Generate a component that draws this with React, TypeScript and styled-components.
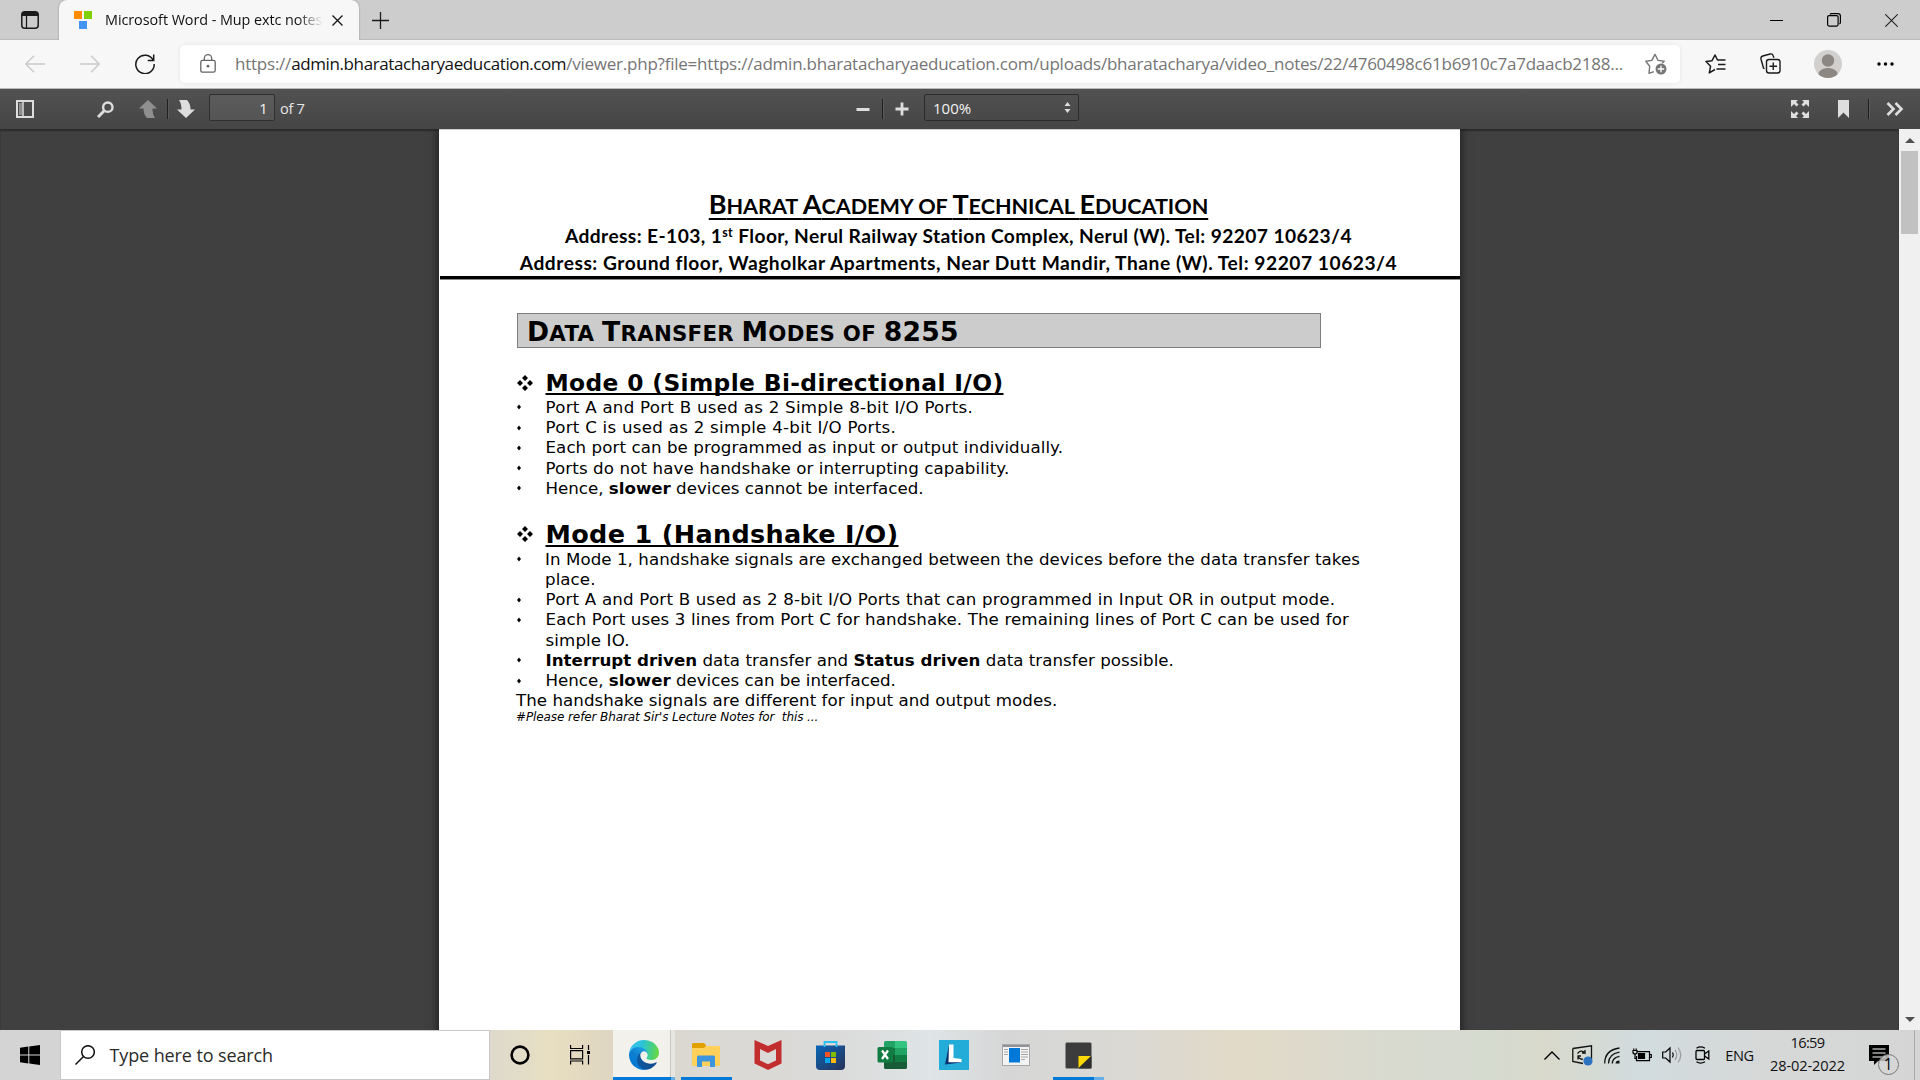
import React from "react";
import styled, { createGlobalStyle } from "styled-components";

const ui = `"Open Sans", "Noto Sans", sans-serif`;

const Global = createGlobalStyle`
  * { box-sizing: border-box; }
  html, body { margin: 0; padding: 0; overflow: hidden; }
  svg { display: block; flex: none; }
`;

const Screen = styled.div`
  width: 1920px;
  height: 1080px;
  display: flex;
  flex-direction: column;
  overflow: hidden;
  background: #404040;
  font-family: ${ui};
`;

const Slot = styled.div<{ $w: number; $h?: number }>`
  flex: none;
  width: ${(p) => p.$w}px;
  height: ${(p) => (p.$h ? `${p.$h}px` : "100%")};
  display: flex;
  align-items: center;
  justify-content: center;
`;

const Spacer = styled.div`
  flex: 1;
`;

const Gap = styled.div<{ $w: number }>`
  flex: none;
  width: ${(p) => p.$w}px;
`;

/* Browser chrome */
const TabStrip = styled.div`
  flex: none;
  height: 40px;
  display: flex;
  background: #cdcdcd;
  box-shadow: inset 0 -1px 0 #bcbcbc;
`;

const Tab = styled.div`
  width: 300px;
  height: 40px;
  display: flex;
  align-items: center;
  padding: 0 14px 0 15px;
  background: #f7f7f7;
  border-radius: 8px 8px 0 0;
  box-shadow: 0 0 2px rgba(0, 0, 0, 0.35);
  clip-path: inset(-2px -3px 0 -3px);
`;

const TabTitle = styled.div`
  width: 218px;
  margin: 0 9px 0 13px;
  padding-bottom: 1px;
  overflow: hidden;
  white-space: nowrap;
  font-size: 14.4px;
  letter-spacing: -0.06px;
  color: #111;
  mask-image: linear-gradient(to right, #000 88%, transparent 100%);
`;

const NavBar = styled.div`
  flex: none;
  height: 49px;
  display: flex;
  align-items: center;
  padding: 0 7px 1px 7.5px;
  background: #f7f7f7;
  border-bottom: 1px solid #b9b9b9;
`;

const AddressBar = styled.div`
  width: 1500px;
  height: 38px;
  margin: 0 7.5px;
  display: flex;
  align-items: center;
  background: #fff;
  border-radius: 5px;
  box-shadow: 0 0 4px rgba(0, 0, 0, 0.08);
`;

const Url = styled.div`
  width: 1409.5px;
  padding-bottom: 1px;
  white-space: pre;
  font-size: 17px;
  color: #757575;
  letter-spacing: -0.232px;
`;

const Host = styled.span`
  color: #111;
  letter-spacing: -0.385px;
`;

/* PDF toolbar */
const PdfBar = styled.div`
  flex: none;
  height: 40px;
  display: flex;
  align-items: center;
  background: linear-gradient(#525252, #454545);
  color: #e6e6e6;
  font-size: 14.6px;
`;

const Divider = styled.div<{ $ml: number; $mr: number }>`
  width: 1px;
  height: 20px;
  margin: 0 ${(p) => p.$mr}px 0 ${(p) => p.$ml}px;
  background: #1f1f1f;
  box-shadow: 1px 0 0 #5a5a5a;
`;

const PageInput = styled.div`
  width: 66px;
  height: 27px;
  margin: 0 5px 3px 14px;
  padding-right: 6.5px;
  display: flex;
  align-items: center;
  justify-content: flex-end;
  border: 1px solid #2f2f2f;
  border-radius: 2px;
  background: linear-gradient(#5c5c5c, #545454);
  color: #f2f2f2;
`;

const PageCount = styled.div`
  width: 576px;
  padding-bottom: 3px;
  letter-spacing: -0.3px;
`;

const ZoomSelect = styled.div`
  width: 155px;
  height: 27px;
  margin: 0 0 3px 15px;
  padding: 0 7px 0 8px;
  display: flex;
  align-items: center;
  justify-content: space-between;
  border: 1px solid #2b2b2b;
  border-radius: 2px;
  background: linear-gradient(#505050, #484848);
  color: #f2f2f2;
  font-size: 15px;
`;

/* Document */
const Viewer = styled.div`
  flex: 1;
  min-height: 0;
  display: flex;
`;

const Canvas = styled.div`
  flex: 1;
  min-width: 0;
  overflow: hidden;
  padding-left: 439px;
  background: #404040;
  box-shadow: inset 0 2px 2px rgba(0, 0, 0, 0.35);
`;

const Page = styled.div`
  width: 1021px;
  height: 1320px;
  padding-top: 58.6px;
  background: #fff;
  border-top: 1px solid #cfcfcf;
  color: #000;
  box-shadow: 0 0 9px 1px rgba(0, 0, 0, 0.6);
`;

const Letterhead = styled.div`
  margin-left: 1px;
  padding: 0 0 0.2px 17px;
  border-bottom: 3px solid #000;
  box-shadow: 0 1px 0 #8a8a8a;
  text-align: center;
  font-family: Lato, sans-serif;
  font-weight: 700;
`;

const Academy = styled.div`
  height: 33.2px;
  line-height: 29px;
  font-size: 21.6px;
  letter-spacing: -0.04px;
  text-decoration: underline;
  text-decoration-thickness: 2px;
  text-underline-offset: 4px;
  text-decoration-skip-ink: none;
`;

const Cap = styled.span<{ $s: number }>`
  font-size: ${(p) => p.$s}px;
`;

const Address = styled.div<{ $ls: number }>`
  height: 27px;
  line-height: 28px;
  font-size: 19.2px;
  white-space: nowrap;
  letter-spacing: ${(p) => p.$ls}px;
`;

const Sup = styled.sup`
  font-size: 12.5px;
  line-height: 0;
  vertical-align: 6px;
`;

const Body = styled.div`
  padding: 34.4px 100px 0 78px;
  font-family: "DejaVu Sans", Verdana, sans-serif;
`;

const Banner = styled.div`
  width: 804px;
  height: 35px;
  padding: 1.5px 0 0 9px;
  margin-bottom: 20.4px;
  border: 1.5px solid #7d7d7d;
  background: #ccc;
  font-size: 21.3px;
  font-weight: 700;
  line-height: 31.5px;
  letter-spacing: 0.27px;
`;

const ModeHeading = styled.div<{ $size: number; $h: number; $ls: number }>`
  height: ${(p) => p.$h}px;
  line-height: ${(p) => p.$h}px;
  display: flex;
  align-items: center;
  font-size: ${(p) => p.$size}px;
  font-weight: 700;
  letter-spacing: ${(p) => p.$ls}px;
`;

const Underlined = styled.span`
  margin-left: 12.5px;
  text-decoration: underline;
  text-decoration-thickness: 2px;
  text-underline-offset: 2px;
  text-decoration-skip-ink: none;
`;

const Notes = styled.ul<{ $gap: number; $line: number }>`
  margin: 0 0 ${(p) => p.$gap}px;
  padding: 0;
  list-style: none;
  line-height: ${(p) => p.$line}px;
`;

const Note = styled.li<{ $ls: number }>`
  display: flex;
  font-size: 16.67px;
  letter-spacing: ${(p) => p.$ls}px;
  white-space: nowrap;
`;

const Dot = styled.span`
  width: 28.5px;
  padding-top: 6.5px;
`;

const Plain = styled.div`
  font-size: 16.67px;
  line-height: 20.2px;
  letter-spacing: 0.046px;
  margin-left: -1px;
`;

const Footnote = styled.div`
  font-size: 12px;
  line-height: 13.4px;
  font-style: italic;
  white-space: pre;
  letter-spacing: -0.1px;
  margin-left: -1px;
`;

const Scrollbar = styled.div`
  width: 21px;
  display: flex;
  flex-direction: column;
  align-items: center;
  background: #f0f0f0;
`;

const Thumb = styled.div`
  width: 17px;
  height: 83px;
  background: #c1c1c1;
`;

/* Taskbar */
const Taskbar = styled.div`
  flex: none;
  height: 50px;
  display: flex;
  align-items: stretch;
  background: linear-gradient(
    to right,
    #d4d4d4 0,
    #d4d4d4 60px,
    #dddacd 490px,
    #e8dfc2 550px,
    #e2d8c0 590px,
    #d9d3c8 640px,
    #dbd9d4 700px,
    #dadad9 830px,
    #dfe4e6 930px,
    #d6d6d6 1010px,
    #dad9d4 1120px,
    #e2dac8 1240px,
    #d9dad0 1380px,
    #d5dacf 1490px,
    #d8d9cb 1545px,
    #d2dcde 1640px,
    #d6d8d8 1760px,
    #d5d5d5 1920px
  );
`;

const SearchBox = styled.div`
  width: 430px;
  padding-left: 14px;
  display: flex;
  align-items: center;
  gap: 14.5px;
  background: #fff;
  border: 1px solid #c8c8c8;
  font-size: 18px;
  letter-spacing: -0.11px;
  color: #2b2b2b;
`;

const Launch = styled.div<{ $active?: boolean }>`
  width: 62px;
  display: flex;
  flex-direction: column;
  align-items: center;
  background: ${(p) =>
    p.$active
      ? "linear-gradient(to right, #f3f1ec 57px, #c9c6c1 57px, #c9c6c1 58px, #e8e6e2 58px)"
      : "none"};
`;

const AppIcon = styled.div`
  height: 47px;
  padding-top: 3px;
  display: flex;
  align-items: center;
`;

const Running = styled.div<{ $w: number; $tail: number }>`
  width: ${(p) => p.$w}px;
  height: 3px;
  background: linear-gradient(
    to right,
    #0078d7 ${(p) => p.$w - p.$tail}px,
    #66aee7 ${(p) => p.$w - p.$tail}px
  );
`;

const Lang = styled.div`
  width: 45px;
  display: flex;
  align-items: center;
  justify-content: center;
  font-size: 14.6px;
  letter-spacing: -0.4px;
  color: #111;
`;

const Clock = styled.div`
  width: 91px;
  display: flex;
  flex-direction: column;
  align-items: center;
  padding-top: 1px;
  font-size: 14.6px;
  line-height: 23px;
  letter-spacing: -0.1px;
  color: #111;
`;

const Time = styled.div`
  letter-spacing: -0.6px;
`;

const ShowDesktop = styled.div`
  width: 6px;
  border-left: 1px solid #a9a9a9;
`;

const Bullet = () => (
  <Dot>
    <svg width="4" height="6" viewBox="0 0 4 6">
      <path d="M2 0.600 4 3 2 5.400 0 3Z" fill="#000" />
    </svg>
  </Dot>
);

const Diamonds = () => (
  <svg width="16" height="16" viewBox="0 0 16 16" fill="#000">
    <path d="M8 0 11 3 8 6 5 3ZM8 10 11 13 8 16 5 13ZM3 5 6 8 3 11 0 8ZM13 5 16 8 13 11 10 8Z" />
  </svg>
);

const EdgeLogo = () => (
  <svg width="30" height="30" viewBox="0 0 256 256">
    <defs>
      <linearGradient id="ea" x1="60" y1="177" x2="241" y2="177" gradientUnits="userSpaceOnUse">
        <stop offset="0" stopColor="#0c59a4" />
        <stop offset="1" stopColor="#114a8b" />
      </linearGradient>
      <linearGradient id="eb" x1="150" y1="100" x2="46" y2="225" gradientUnits="userSpaceOnUse">
        <stop offset="0" stopColor="#1b9de2" />
        <stop offset="0.5" stopColor="#0f80d0" />
        <stop offset="1" stopColor="#0078d4" />
      </linearGradient>
      <linearGradient id="ec" x1="20" y1="70" x2="250" y2="110" gradientUnits="userSpaceOnUse">
        <stop offset="0" stopColor="#35c1f1" />
        <stop offset="0.4" stopColor="#2cc3d8" />
        <stop offset="0.75" stopColor="#45cf87" />
        <stop offset="1" stopColor="#66d845" />
      </linearGradient>
    </defs>
    <g transform="translate(-4.63 -4.92)">
      <path fill="url(#ea)" d="M235.68,195.46a93.73,93.73,0,0,1-10.54,4.71,101.87,101.87,0,0,1-35.9,6.46c-47.32,0-88.54-32.55-88.54-74.32A31.48,31.48,0,0,1,117.13,105c-42.8,1.8-53.8,46.4-53.8,72.53,0,73.88,68.09,81.37,82.76,81.37,7.91,0,19.84-2.3,27-4.56l1.31-.44a128.34,128.34,0,0,0,66.6-52.8,4,4,0,0,0-5.32-5.64Z" />
      <path fill="url(#eb)" d="M110.34,246.34A79.2,79.2,0,0,1,87.6,225,80.72,80.72,0,0,1,117.13,105c3.12-1.47,8.45-4.13,15.54-4a32.35,32.35,0,0,1,25.69,13,31.88,31.88,0,0,1,6.36,18.66c0-.21,24.46-79.6-80-79.6-43.9,0-80,41.66-80,78.21a130.15,130.15,0,0,0,12.11,56,128,128,0,0,0,156.38,67.11,75.55,75.55,0,0,1-62.78-8Z" />
      <path fill="url(#ec)" d="M156.94,153.78c-.81,1.05-3.3,2.5-3.3,5.66,0,2.61,1.7,5.12,4.72,7.23,14.38,10,41.49,8.68,41.56,8.68a59.56,59.56,0,0,0,30.27-8.35A61.38,61.38,0,0,0,260.62,114c.26-22.41-8-37.31-11.34-43.91C228.09,28.76,182.35,5,132.62,5a128,128,0,0,0-128,126.2c.48-36.54,36.8-66.05,80-66.05,3.5,0,23.46.34,42,10.07,16.34,8.58,24.9,18.94,30.85,29.21,6.18,10.67,7.28,24.15,7.28,29.52S162,147.2,156.94,153.78Z" />
    </g>
  </svg>
);

const Explorer = () => (
  <svg width="28" height="24" viewBox="0 0 28 24">
    <path d="M1 0h11l2 2v3H0V1Z" fill="#dfa000" />
    <path d="M0 5h12l2-2h13q1 0 1 1v18q0 1-1 1H1q-1 0-1-1Z" fill="#ffd05a" />
    <path d="M5 24V14q0-1.500 1.500-1.500h15Q23 12.500 23 14v10h-5v-5.500h-8V24Z" fill="#3d95de" />
  </svg>
);

const McAfee = () => (
  <svg width="28" height="30" viewBox="0 0 28 30">
    <path d="M0.500 0 14 6 27.500 0V23.500L14 30 0.500 23.500ZM6 9v11.500l8 3.700 8-3.700V9l-8 4Z" fill="#c22d2e" fillRule="evenodd" />
  </svg>
);

const Store = () => (
  <svg width="29" height="29" viewBox="0 0 29 29">
    <defs>
      <linearGradient id="st" x1="0" y1="0" x2="1" y2="1">
        <stop offset="0" stopColor="#0a66b8" />
        <stop offset="1" stopColor="#273257" />
      </linearGradient>
    </defs>
    <path d="M0 4.500h29V25q0 4-4 4H4q-4 0-4-4Z" fill="url(#st)" />
    <path d="M8.500 6V1h12v5" fill="none" stroke="#2cc1f3" strokeWidth="1.800" />
    <path d="M9 11h5v5H9Z" fill="#f35325" />
    <path d="M15 11h5v5h-5Z" fill="#81bc06" />
    <path d="M9 17h5v5H9Z" fill="#05a6f0" />
    <path d="M15 17h5v5h-5Z" fill="#ffba08" />
  </svg>
);

const Excel = () => (
  <svg width="30" height="28" viewBox="0 0 30 28">
    <path d="M7 1.500Q7 0 8.500 0H18v7H7Z" fill="#21a366" />
    <path d="M18 0h10.500Q30 0 30 1.500V7H18Z" fill="#33c481" />
    <path d="M7 7h11v7H7Z" fill="#107c41" />
    <path d="M18 7h12v7H18Z" fill="#21a366" />
    <path d="M7 14h11v7H7Z" fill="#185c37" />
    <path d="M18 14h12v7H18Z" fill="#107c41" />
    <path d="M7 21h23v5.500Q30 28 28.500 28h-20Q7 28 7 26.500Z" fill="#185c37" />
    <rect x="0.500" y="6" width="15.500" height="15.500" rx="1.500" fill="#107c41" />
    <path d="M5 9.500l6 8.500M11 9.500l-6 8.500" stroke="#fff" strokeWidth="2.200" />
  </svg>
);

const LApp = () => (
  <svg width="30" height="30" viewBox="0 0 30 30">
    <path d="M0 0h30v30H0Z" fill="#24acd9" />
    <path d="M10 5 6 24.500 22.500 22.500 13 20Z" fill="#07326e" />
    <path d="M10 4.500h4.500V18l8 1v3.300H9.500Z" fill="#fff" />
  </svg>
);

const WindowApp = () => (
  <svg width="28" height="22" viewBox="0 0 28 22">
    <rect x="0.500" y="0.500" width="27" height="21" fill="#f3f3f3" stroke="#a8a8a8" />
    <path d="M1 1h26v2H1Z" fill="#8f9298" />
    <path d="M2 5.500h4M2 8h4M2 10.500h4M19 5.500h7M19 8h7M19 10.500h7M19 13h7M19 15.500h4" stroke="#a7a7a7" />
    <path d="M7 4h11v14.500H7Z" fill="#0078d7" />
  </svg>
);

const Sticky = () => (
  <svg width="27" height="27" viewBox="0 0 27 27">
    <rect x="0.500" y="0.500" width="26" height="26" rx="1.500" fill="#3c3c3c" stroke="#8c8c8c" strokeWidth="0.600" />
    <path d="M13.500 26V14H26Z" fill="#ffd800" />
    <path d="M13.500 26.500 26.500 14V25.500q0 1-1 1Z" fill="#2e2e2e" />
  </svg>
);

const modeZero = [
  { ls: 0.268, text: <>Port A and Port B used as 2 Simple 8-bit I/O Ports.</> },
  { ls: 0.265, text: <>Port C is used as 2 simple 4-bit I/O Ports.</> },
  { ls: 0.074, text: <>Each port can be programmed as input or output individually.</> },
  { ls: 0.105, text: <>Ports do not have handshake or interrupting capability.</> },
  { ls: 0, text: <>Hence, <b>slower</b> devices cannot be interfaced.</> },
];

const modeOne = [
  { ls: 0.059, text: <>In Mode 1, handshake signals are exchanged between the devices before the data transfer takes<br />place.</> },
  { ls: 0.2, text: <>Port A and Port B used as 2 8-bit I/O Ports that can programmed in Input OR in output mode.</> },
  { ls: 0.12, text: <>Each Port uses 3 lines from Port C for handshake. The remaining lines of Port C can be used for<br />simple IO.</> },
  { ls: 0.03, text: <><b>Interrupt driven</b> data transfer and <b>Status driven</b> data transfer possible.</> },
  { ls: -0.01, text: <>Hence, <b>slower</b> devices can be interfaced.</> },
];

export default function App() {
  return (
    <Screen>
      <Global />
      <TabStrip>
        <Slot $w={59}>
          <svg width="18" height="18" viewBox="0 0 18 18">
            <rect x="0.800" y="0.800" width="16.400" height="16.400" rx="3" fill="none" stroke="#1b1b1b" strokeWidth="1.500" />
            <path d="M1 5V3.500Q1 1 3.500 1h11Q17 1 17 3.500V5Z" fill="#1b1b1b" />
            <path d="M5.500 5v12" stroke="#1b1b1b" strokeWidth="1.300" />
          </svg>
        </Slot>
        <Tab>
          <svg width="18" height="18" viewBox="0 0 18 18">
            <path d="M0 0h8v8H0Z" fill="#ff8c00" />
            <path d="M10 0h8v8h-8Z" fill="#7ed000" />
            <path d="M5 10h8v8H5Z" fill="#4394f0" />
          </svg>
          <TabTitle>Microsoft Word - Mup extc notes</TabTitle>
          <svg width="11" height="11" viewBox="0 0 11 11">
            <path d="M0.500 0.500l10 10M10.500 0.500l-10 10" stroke="#1b1b1b" strokeWidth="1.400" />
          </svg>
        </Tab>
        <Slot $w={43}>
          <svg width="17" height="17" viewBox="0 0 17 17">
            <path d="M8.500 0v17M0 8.500h17" stroke="#1b1b1b" strokeWidth="1.300" />
          </svg>
        </Slot>
        <Spacer />
        <Slot $w={57}>
          <svg width="13" height="13" viewBox="0 0 13 13">
            <path d="M0 6.500h13" stroke="#000" />
          </svg>
        </Slot>
        <Slot $w={57}>
          <svg width="14" height="14" viewBox="0 0 14 14" fill="none" stroke="#000" strokeWidth="1.200">
            <rect x="0.600" y="2.600" width="10.500" height="10.500" rx="1.500" />
            <path d="M3 1.500Q3.400 0.600 4.600 0.600H11q2.400 0 2.400 2.400v6.500q0 1-1 1.500" />
          </svg>
        </Slot>
        <Slot $w={58}>
          <svg width="13" height="13" viewBox="0 0 13 13">
            <path d="M0.300 0.300l12.400 12.400M12.700 0.300L0.300 12.700" stroke="#222" strokeWidth="1.100" />
          </svg>
        </Slot>
      </TabStrip>

      <NavBar>
        <Slot $w={55}>
          <svg width="20" height="18" viewBox="0 0 20 18">
            <path d="M20 9H1M9 0.700 0.800 9 9 17.300" fill="none" stroke="#cacaca" strokeWidth="1.400" />
          </svg>
        </Slot>
        <Slot $w={55}>
          <svg width="20" height="18" viewBox="0 0 20 18">
            <path d="M0 9h19M11 0.700 19.200 9 11 17.300" fill="none" stroke="#cacaca" strokeWidth="1.400" />
          </svg>
        </Slot>
        <Slot $w={55}>
          <svg width="20" height="20" viewBox="0 0 20 20">
            <path d="M18.200 6.200A9.200 9.200 0 1 0 19.200 10M18.700 0.500v6H12.700" fill="none" stroke="#1b1b1b" strokeWidth="1.500" />
          </svg>
        </Slot>
        <AddressBar>
          <Slot $w={55}>
            <svg width="16" height="19" viewBox="0 0 16 19">
              <rect x="0.800" y="6.300" width="14.400" height="11.900" rx="1.800" fill="none" stroke="#666" strokeWidth="1.300" />
              <path d="M4.300 6V4.400a3.700 3.700 0 0 1 7.400 0V6" fill="none" stroke="#666" strokeWidth="1.300" />
              <circle cx="8" cy="12.200" r="1.400" fill="#666" />
            </svg>
          </Slot>
          <Url>
            https://<Host>admin.bharatacharyaeducation.com</Host>
            /viewer.php?file=https://admin.bharatacharyaeducation.com/uploads/bharatacharya/video_notes/22/4760498c61b6910c7a7daacb2188...
          </Url>
          <svg width="22" height="22" viewBox="0 0 22 22">
            <path d="M9 18.600 4 20.300l0.700-7L0.800 8.200l6-0.800L10 1.300l3 6.100 6.200 0.800-2 2" fill="none" stroke="#767676" strokeWidth="1.400" strokeLinejoin="round" />
            <circle cx="16" cy="16" r="5.500" fill="#767676" />
            <path d="M16 12.800v6.400M12.800 16h6.400" stroke="#fff" strokeWidth="1.300" />
          </svg>
        </AddressBar>
        <Slot $w={55}>
          <svg width="21" height="20" viewBox="0 0 21 20" fill="none" stroke="#1b1b1b" strokeWidth="1.500" strokeLinejoin="round">
            <path d="M10 15.500 4.300 18.900l1.300-6.700L1 7.500l6-0.800L10 1l2.500 5H20.500M13 10.500h7.500M11.500 15h9" />
          </svg>
        </Slot>
        <Slot $w={55}>
          <svg width="21" height="21" viewBox="0 0 21 21" fill="none" stroke="#1b1b1b" strokeWidth="1.400">
            <rect x="6.500" y="6.500" width="13.500" height="13.500" rx="2.500" />
            <path d="M13.250 9.500v7.500M9.500 13.250h7.500M4.500 15.800 3.500 15 1 6.200Q0.400 3.800 2.700 3l7.500-2q2.300-0.500 3 1.700l0.700 2" />
          </svg>
        </Slot>
        <Slot $w={60}>
          <svg width="28" height="28" viewBox="0 0 28 28">
            <clipPath id="av"><circle cx="14" cy="14" r="14" /></clipPath>
            <circle cx="14" cy="14" r="14" fill="#d2d0ce" />
            <g clipPath="url(#av)" fill="#8c8782">
              <circle cx="14" cy="10.500" r="6.200" />
              <ellipse cx="14" cy="25" rx="10" ry="7" />
            </g>
          </svg>
        </Slot>
        <Slot $w={55}>
          <svg width="17" height="4" viewBox="0 0 17 4">
            <circle cx="2" cy="2" r="1.700" /><circle cx="8.500" cy="2" r="1.700" /><circle cx="15" cy="2" r="1.700" />
          </svg>
        </Slot>
      </NavBar>

      <PdfBar>
        <Slot $w={50}>
          <svg width="18" height="18" viewBox="0 0 18 18">
            <rect x="1" y="1" width="16" height="16" fill="none" stroke="#dedede" strokeWidth="2" />
            <path d="M3 3h3v12H3Z" fill="#8d8d8d" />
            <path d="M7 2v14" stroke="#dedede" strokeWidth="1.500" />
          </svg>
        </Slot>
        <Gap $w={38} />
        <Slot $w={35}>
          <svg width="17" height="17" viewBox="0 0 17 17" fill="none" stroke="#dedede">
            <circle cx="10.800" cy="6.200" r="4.700" strokeWidth="2.400" />
            <path d="M7 10 1 16" strokeWidth="3" />
          </svg>
        </Slot>
        <Gap $w={16} />
        <svg width="18" height="18" viewBox="0 0 18 18">
          <path d="M9 0l9 8.500h-4.500q0 6 2.500 9.500H8Q4.500 14.500 4.500 8.500H0Z" fill="#8f8f8f" />
        </svg>
        <Divider $ml={10} $mr={9} />
        <svg width="18" height="18" viewBox="0 0 18 18">
          <path d="M9 18l9-8.500h-4.500Q13.500 3.500 10 0H2q2.500 3.500 2.500 9.500H0Z" fill="#dedede" />
        </svg>
        <PageInput>1</PageInput>
        <PageCount>of 7</PageCount>
        <svg width="14" height="3" viewBox="0 0 14 3"><path d="M0.500 0h13v3h-13Z" fill="#dedede" /></svg>
        <Divider $ml={12} $mr={12} />
        <svg width="14" height="14" viewBox="0 0 14 14"><path d="M5.600 0.500h2.800v13H5.600ZM0.500 5.600h13v2.800h-13Z" fill="#dedede" /></svg>
        <ZoomSelect>
          100%
          <svg width="7" height="11" viewBox="0 0 7 11"><path d="M3.500 0 6.500 4h-6ZM3.500 11l3-4h-6Z" fill="#dedede" /></svg>
        </ZoomSelect>
        <Spacer />
        <Slot $w={48}>
          <svg width="18" height="18" viewBox="0 0 18 18" fill="#dedede">
            <path d="M0 0h7L5 2l2.500 2.500-2 2L3 4 0 7ZM18 0h-7l2 2-2.500 2.500 2 2L15 4l3 3ZM0 18h7l-2-2 2.500-2.500-2-2L3 14l-3-3ZM18 18h-7l2-2-2.500-2.500 2-2L15 14l3-3Z" />
          </svg>
        </Slot>
        <Slot $w={38}>
          <svg width="11" height="18" viewBox="0 0 11 18"><path d="M0 0h11v18l-5.500-5.500L0 18Z" fill="#dedede" /></svg>
        </Slot>
        <Divider $ml={6} $mr={1} />
        <Slot $w={50}>
          <svg width="18" height="14" viewBox="0 0 18 14"><path d="M1.500 1l6 6-6 6M9.500 1l6 6-6 6" fill="none" stroke="#dedede" strokeWidth="2.600" /></svg>
        </Slot>
      </PdfBar>

      <Viewer>
        <Canvas>
          <Page>
            <Letterhead>
              <Academy>
                <Cap $s={27}>B</Cap>HARAT <Cap $s={27}>A</Cap>CADEMY OF <Cap $s={27}>T</Cap>ECHNICAL <Cap $s={27}>E</Cap>DUCATION
              </Academy>
              <Address $ls={0.4}>
                Address: E-103, 1<Sup>st</Sup> Floor, Nerul Railway Station Complex, Nerul (W). Tel: 92207 10623/4
              </Address>
              <Address $ls={0.53}>
                Address: Ground floor, Wagholkar Apartments, Near Dutt Mandir, Thane (W). Tel: 92207 10623/4
              </Address>
            </Letterhead>
            <Body>
              <Banner>
                <Cap $s={26.6}>D</Cap>ATA <Cap $s={26.6}>T</Cap>RANSFER <Cap $s={26.6}>M</Cap>ODES OF <Cap $s={26.6}>8255</Cap>
              </Banner>
              <ModeHeading $size={23.33} $h={29} $ls={0.374}>
                <Diamonds />
                <Underlined>Mode 0 (Simple Bi-directional I/O)</Underlined>
              </ModeHeading>
              <Notes $gap={19.8} $line={20.25}>
                {modeZero.map((n, i) => (
                  <Note key={i} $ls={n.ls}><Bullet /><span>{n.text}</span></Note>
                ))}
              </Notes>
              <ModeHeading $size={25.5} $h={31} $ls={0.333}>
                <Diamonds />
                <Underlined>Mode 1 (Handshake I/O)</Underlined>
              </ModeHeading>
              <Notes $gap={0} $line={20.2}>
                {modeOne.map((n, i) => (
                  <Note key={i} $ls={n.ls}><Bullet /><span>{n.text}</span></Note>
                ))}
              </Notes>
              <Plain>The handshake signals are different for input and output modes.</Plain>
              <Footnote>#Please refer Bharat Sir's Lecture Notes for  this ...</Footnote>
            </Body>
          </Page>
        </Canvas>
        <Scrollbar>
          <Slot $w={21} $h={22}>
            <svg width="10" height="5" viewBox="0 0 10 5"><path d="M0 5 5 0l5 5Z" fill="#505050" /></svg>
          </Slot>
          <Thumb />
          <Spacer />
          <Slot $w={21} $h={21}>
            <svg width="10" height="5" viewBox="0 0 10 5"><path d="M0 0h10L5 5Z" fill="#505050" /></svg>
          </Slot>
        </Scrollbar>
      </Viewer>

      <Taskbar>
        <Slot $w={60}>
          <svg width="20" height="20" viewBox="0 0 20 20">
            <path d="M0 2.800 8.300 1.600V9.500H0ZM9.300 1.400 20 0v9.500H9.300ZM0 10.500h8.300v7.900L0 17.200ZM9.300 10.500H20V20L9.300 18.600Z" fill="#000" />
          </svg>
        </Slot>
        <SearchBox>
          <svg width="20" height="20" viewBox="0 0 20 20" fill="none" stroke="#111" strokeWidth="1.500">
            <circle cx="13" cy="7" r="6.300" />
            <path d="M8.500 11.500 0.500 19.500" />
          </svg>
          Type here to search
        </SearchBox>
        <Slot $w={60}>
          <svg width="20" height="20" viewBox="0 0 20 20"><circle cx="10" cy="10" r="8.400" fill="none" stroke="#000" strokeWidth="2.600" /></svg>
        </Slot>
        <Slot $w={60}>
          <svg width="20" height="20" viewBox="0 0 20 20" fill="none" stroke="#000" strokeWidth="1.200">
            <path d="M0.600 0v3.500h12V0M0.600 19.500V16h12v3.500M0.600 5.600h12v8.300h-12ZM18.500 0v5M18.500 10v9.500" />
            <path d="M17 6h3v3h-3Z" fill="#000" stroke="none" />
          </svg>
        </Slot>
        <Gap $w={3} />
        <Launch $active><AppIcon><EdgeLogo /></AppIcon><Running $w={62} $tail={4} /></Launch>
        <Launch><AppIcon><Explorer /></AppIcon><Running $w={51} $tail={0} /></Launch>
        <Launch><AppIcon><McAfee /></AppIcon></Launch>
        <Launch><AppIcon><Store /></AppIcon></Launch>
        <Launch><AppIcon><Excel /></AppIcon></Launch>
        <Launch><AppIcon><LApp /></AppIcon></Launch>
        <Launch><AppIcon><WindowApp /></AppIcon></Launch>
        <Launch><AppIcon><Sticky /></AppIcon><Running $w={51} $tail={10} /></Launch>
        <Spacer />
        <Slot $w={30}>
          <svg width="16" height="9" viewBox="0 0 16 9"><path d="M0.500 8.500 8 1l7.500 7.500" fill="none" stroke="#000" strokeWidth="1.400" /></svg>
        </Slot>
        <Slot $w={30}>
          <svg width="21" height="21" viewBox="0 0 21 21" fill="none" stroke="#111" strokeWidth="1.300">
            <path d="M0.800 3.500 19.500 0.800V14M0.800 3.500v13L11 18.500" />
            <path d="M5.500 8.500Q9 4 13 8V5M13 8h-3M6 14.500v-3.500h3M6 11.500Q8 15 11 14" />
            <circle cx="16" cy="16" r="4.600" fill="#2b72c0" stroke="none" />
          </svg>
        </Slot>
        <Slot $w={30}>
          <svg width="17" height="17" viewBox="0 0 17 17" fill="none" stroke="#111" strokeWidth="1.300">
            <path d="M0.700 16.500Q0.700 3 15.500 1M4.500 16.500Q4.500 7 15.500 5.200M8.300 16.500Q8.500 10.500 15.500 9.300" />
            <path d="M11.500 16.500q0-3 4-3v3Z" fill="#111" stroke="none" />
          </svg>
        </Slot>
        <Slot $w={30}>
          <svg width="20" height="14" viewBox="0 0 20 14" fill="none" stroke="#000" strokeWidth="1.200">
            <path d="M5 3.600h12.500v9H4.500V8M17.500 6.500h1.800v3h-1.800" />
            <path d="M6.500 5.500h6v5h-6Z" fill="#000" />
            <path d="M1 2.500h4v2.500q-2 2-4 0ZM1.800 0.500v2M4.200 0.500v2M3 6v4.500h1.500" />
          </svg>
        </Slot>
        <Slot $w={30}>
          <svg width="20" height="18" viewBox="0 0 20 18" fill="none" stroke="#000" strokeWidth="1.200">
            <path d="M0.700 6h3L8 2v14l-4.300-4h-3Z" />
            <path d="M10.500 6.500q1.500 2.500 0 5" />
            <path d="M13 4q3.500 5 0 10M16 1.500q5.500 7.500 0 15" stroke="#9a9a9a" />
          </svg>
        </Slot>
        <Slot $w={30}>
          <svg width="15" height="18" viewBox="0 0 15 18" fill="none" stroke="#000" strokeWidth="1.300">
            <rect x="1" y="4.500" width="8.500" height="9" rx="1" />
            <path d="M9.500 8 13.800 5v8L9.500 10M1.500 2.200Q5.500-0.500 10 2.200M1.500 15.800Q5.500 18.500 10 15.800" />
          </svg>
        </Slot>
        <Lang>ENG</Lang>
        <Clock><Time>16:59</Time><div>28-02-2022</div></Clock>
        <Slot $w={61}>
          <svg width="60" height="50" viewBox="0 0 60 50">
            <path d="M15 15h20v16H24l-4 4v-4h-5Z" fill="#000" />
            <path d="M18.500 19h13M18.500 23h13M18.500 27h13" stroke="#fff" strokeWidth="1.200" />
            <circle cx="34.500" cy="34.500" r="10" fill="#d6d6d6" fillOpacity="0.800" stroke="#777" />
            <text x="34.300" y="40" textAnchor="middle" fontFamily="Open Sans, sans-serif" fontSize="15.500" fill="#000">1</text>
          </svg>
        </Slot>
        <ShowDesktop />
      </Taskbar>
    </Screen>
  );
}
